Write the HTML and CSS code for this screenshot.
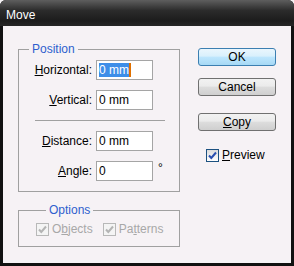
FILE: index.html
```html
<!DOCTYPE html>
<html>
<head>
  <title>Move</title>
  <link rel="stylesheet" href="styles.css">
</head>
<body>
  <div class="window">
    <div class="titlebar">Move</div>
    <div class="client">
      <div class="left">
        <fieldset class="group">
          <legend>Position</legend>
          <div class="row">
            <span class="label"><u>H</u>orizontal:</span>
            <span class="field"><span class="sel">0 mm</span><span class="caret"></span></span>
          </div>
          <div class="row">
            <span class="label"><u>V</u>ertical:</span>
            <span class="field">0 mm</span>
          </div>
          <div class="sep"></div>
          <div class="row">
            <span class="label"><u>D</u>istance:</span>
            <span class="field">0 mm</span>
          </div>
          <div class="row">
            <span class="label"><u>A</u>ngle:</span>
            <span class="field">0</span>
            <span class="deg">&deg;</span>
          </div>
        </fieldset>
        <fieldset class="group options">
          <legend>Options</legend>
          <div class="checks">
            <span class="check disabled"><span class="box"><svg width="11" height="11" viewBox="0 0 11 11"><path d="M2 5.5 L4.3 8 L9 2.5" fill="none" stroke="#b4b4b4" stroke-width="2"/></svg></span>O<u>b</u>jects</span>
            <span class="check disabled"><span class="box"><svg width="11" height="11" viewBox="0 0 11 11"><path d="M2 5.5 L4.3 8 L9 2.5" fill="none" stroke="#b4b4b4" stroke-width="2"/></svg></span>Pa<u>t</u>terns</span>
          </div>
        </fieldset>
      </div>
      <div class="right">
        <button class="btn default">OK</button>
        <button class="btn">Cancel</button>
        <button class="btn copy"><u>C</u>opy</button>
        <span class="check preview"><span class="box"><svg width="11" height="11" viewBox="0 0 11 11"><path d="M2 5.5 L4.3 8 L9 2.5" fill="none" stroke="#2a4fb0" stroke-width="2"/></svg></span><u>P</u>review</span>
      </div>
    </div>
  </div>
</body>
</html>
```
FILE: styles.css
```css
body {
  margin: 0;
  background: #f6f2f5;
  font-family: "Liberation Sans", Arial, sans-serif;
  font-size: 12px;
  color: #000;
}
.window {
  width: 294px;
  height: 266px;
  box-sizing: border-box;
  background: #111;
  border-radius: 6px 6px 0 0;
  display: flex;
  flex-direction: column;
}
.titlebar {
  height: 26px;
  padding-left: 6px;
  color: #fff;
  font-size: 12px;
  line-height: 30px;
  border-radius: 6px 6px 0 0;
  background: linear-gradient(#5e5e5e, #2c2c2c 40%, #1c1c1c 80%, #262626);
}
.client {
  flex: 1;
  margin: 0 3px 3px;
  background: #f6f2f5;
  display: flex;
  align-items: flex-start;
  padding: 16px 0 0 15px;
  gap: 18px;
}
.left {
  width: 162px;
}
.group {
  margin: 0;
  padding: 3px 0 10px 0;
  border: 1px solid #a0a0a0;
}
.group legend {
  margin-left: 10px;
  padding: 0 3px;
  color: #2e5fce;
  font-size: 12px;
  line-height: 15px;
}
.row {
  display: flex;
  align-items: center;
  height: 20px;
  margin-bottom: 10px;
}
.row:last-child {
  margin-bottom: 0;
}
.label {
  width: 73px;
  text-align: right;
  margin-right: 4px;
}
.field {
  width: 57px;
  height: 20px;
  box-sizing: border-box;
  border: 1px solid #a5a5a5;
  background: #fff;
  padding-left: 2px;
  line-height: 18px;
  display: flex;
  align-items: center;
}
.sel {
  background: #3d8ee8;
  color: #fff;
  line-height: 14px;
}
.caret {
  width: 2px;
  height: 14px;
  background: #e07000;
}
.deg {
  margin-left: 5px;
  margin-top: -6px;
}
.sep {
  height: 1px;
  background: #a0a0a0;
  margin: 0 14px 10px 16px;
}
.options {
  margin-top: 11px;
  padding: 4px 0 10px 17px;
}
.checks {
  display: flex;
  gap: 10px;
}
.check {
  display: flex;
  align-items: center;
}
.check .box {
  width: 13px;
  height: 13px;
  box-sizing: border-box;
  border: 1px solid #1c5180;
  background: linear-gradient(#dcdcdc, #fff);
  margin-right: 3px;
  display: flex;
  align-items: center;
  justify-content: center;
}
.check.disabled {
  color: #a8a8a8;
}
.check.disabled .box {
  border-color: #b8b8b8;
  background: #f4f4f4;
}
.right {
  width: 78px;
  display: flex;
  flex-direction: column;
  padding-top: 6px;
}
.btn {
  width: 78px;
  height: 18px;
  padding: 0;
  font-family: inherit;
  font-size: 12px;
  color: #000;
  border: 1px solid #707070;
  border-radius: 3px;
  background: linear-gradient(#f2f2f2, #ebebeb 45%, #dddddd 50%, #cfcfcf);
  margin-bottom: 12px;
}
.btn.default {
  border-color: #3c7fb1;
  background: linear-gradient(#eaf6fd, #d9f0fc 45%, #bee6fd 50%, #a7d9f5);
}
.btn.copy {
  margin-top: 5px;
  margin-bottom: 0;
}
.preview {
  margin-top: 17px;
  margin-left: 8px;
}
```
